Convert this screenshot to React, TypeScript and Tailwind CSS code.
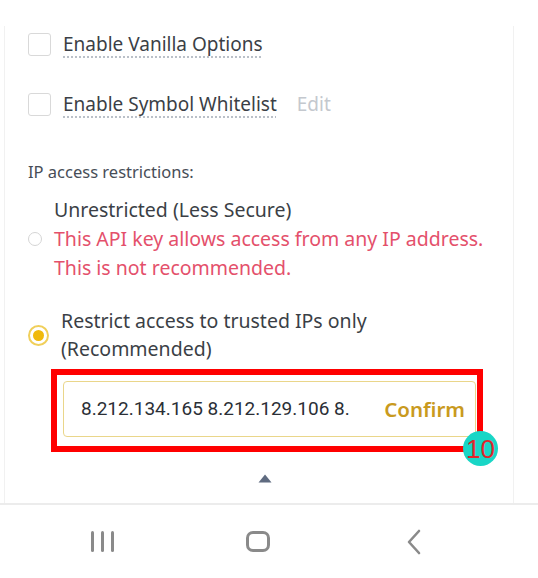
import React from 'react'

const font = { fontFamily: '"Noto Sans", "Open Sans", sans-serif' }

function CheckRow({ label, extra }: { label: string; extra?: string }) {
  return (
    <div className="flex items-center h-[24px]">
      <div className="w-[23px] h-[23px] rounded-[3px] border border-[#d9d9d9] bg-white shrink-0" />
      <span className="ml-[12px] text-[19px] leading-[24px] text-[#3b3f46] underline decoration-dotted decoration-[#b7bdc6] underline-offset-[6px]">
        {label}
      </span>
      {extra && <span className="ml-[20px] text-[19px] leading-[24px] text-[#c4c8ce]">{extra}</span>}
    </div>
  )
}

export default function App(): JSX.Element {
  return (
    <div className="w-[538px] h-[578px] bg-white flex flex-col overflow-hidden" style={font}>
      <div className="h-[26px] shrink-0" />

      {/* settings card */}
      <div className="ml-[4px] w-[510px] flex-1 border-x border-[#f1f1f1] pl-[23px] flex flex-col">
        <div className="mt-[6px]">
          <CheckRow label="Enable Vanilla Options" />
        </div>
        <div className="mt-[36px]">
          <CheckRow label="Enable Symbol Whitelist" extra="Edit" />
        </div>

        <div className="mt-[45px] text-[16.5px] leading-[22px] text-[#474d57]">IP access restrictions:</div>

        <div className="mt-[12px] flex items-center">
          <div className="w-[14px] h-[14px] rounded-full border border-[#d5d5d5] shrink-0" />
          <div className="ml-[12px] text-[19.5px] leading-[29px]">
            <div className="text-[#3b3f46]">Unrestricted (Less Secure)</div>
            <div className="text-[#e4506b]">This API key allows access from any IP address.</div>
            <div className="text-[#e4506b]">This is not recommended.</div>
          </div>
        </div>

        <div className="mt-[25px] flex items-center">
          <div className="w-[21px] h-[21px] rounded-full border-2 border-[#f0cf5a] flex items-center justify-center shrink-0">
            <div className="w-[11px] h-[11px] rounded-full bg-[#f0b90b]" />
          </div>
          <div className="ml-[12px] text-[19.5px] leading-[28px] text-[#3b3f46]">
            <div>Restrict access to trusted IPs only</div>
            <div>(Recommended)</div>
          </div>
        </div>

        {/* highlighted input */}
        <div className="relative mt-[6px] ml-[23px] w-[432px] border-[6px] border-[#ff0000] pt-[6px] pb-[9px] pl-[6px] pr-[1px]">
          <div className="h-[56px] rounded-[4px] border border-[#ead68a] flex items-center pl-[17px] pr-[10px]">
            <div
              className="w-[272px] overflow-hidden whitespace-nowrap text-[19px] text-[#2b2f36]"
              style={{ fontFamily: 'Roboto, "Noto Sans", sans-serif' }}
            >
              8.212.134.165 8.212.129.106 8.
            </div>
            <div className="ml-auto text-[20.5px] font-semibold text-[#c99a1e]">Confirm</div>
          </div>
          <div
            className="absolute -right-[21px] -bottom-[20px] w-[35px] h-[35px] rounded-full bg-[#19d6c6] flex items-center justify-center text-[26px] text-[#e0262b] leading-none"
            style={{ fontFamily: '"Liberation Sans", Arial, sans-serif' }}
          >
            10
          </div>
        </div>

        <div className="mt-[22px] flex justify-center pr-[11px]">
          <svg width="14" height="9" viewBox="0 0 14 9">
            <path d="M7 0.5 L13.5 8.5 L0.5 8.5 Z" fill="#5f6b80" strokeLinejoin="round" />
          </svg>
        </div>
      </div>

      {/* android nav bar */}
      <div className="h-[75px] shrink-0 border-t-2 border-[#ececec] flex items-center pl-[24px]">
        <div className="w-[156px] flex justify-center gap-[7px]">
          <div className="w-[3px] h-[21px] bg-[#8a8a8a] rounded-sm" />
          <div className="w-[3px] h-[21px] bg-[#8a8a8a] rounded-sm" />
          <div className="w-[3px] h-[21px] bg-[#8a8a8a] rounded-sm" />
        </div>
        <div className="w-[156px] flex justify-center">
          <div className="w-[24px] h-[21px] rounded-[7px] border-[3px] border-[#8a8a8a]" />
        </div>
        <div className="w-[156px] flex justify-center">
          <svg width="16" height="26" viewBox="0 0 16 26">
            <polyline points="13,2 3,13 13,24" fill="none" stroke="#8a8a8a" strokeWidth="2.6" strokeLinecap="round" strokeLinejoin="round" />
          </svg>
        </div>
      </div>
    </div>
  )
}
